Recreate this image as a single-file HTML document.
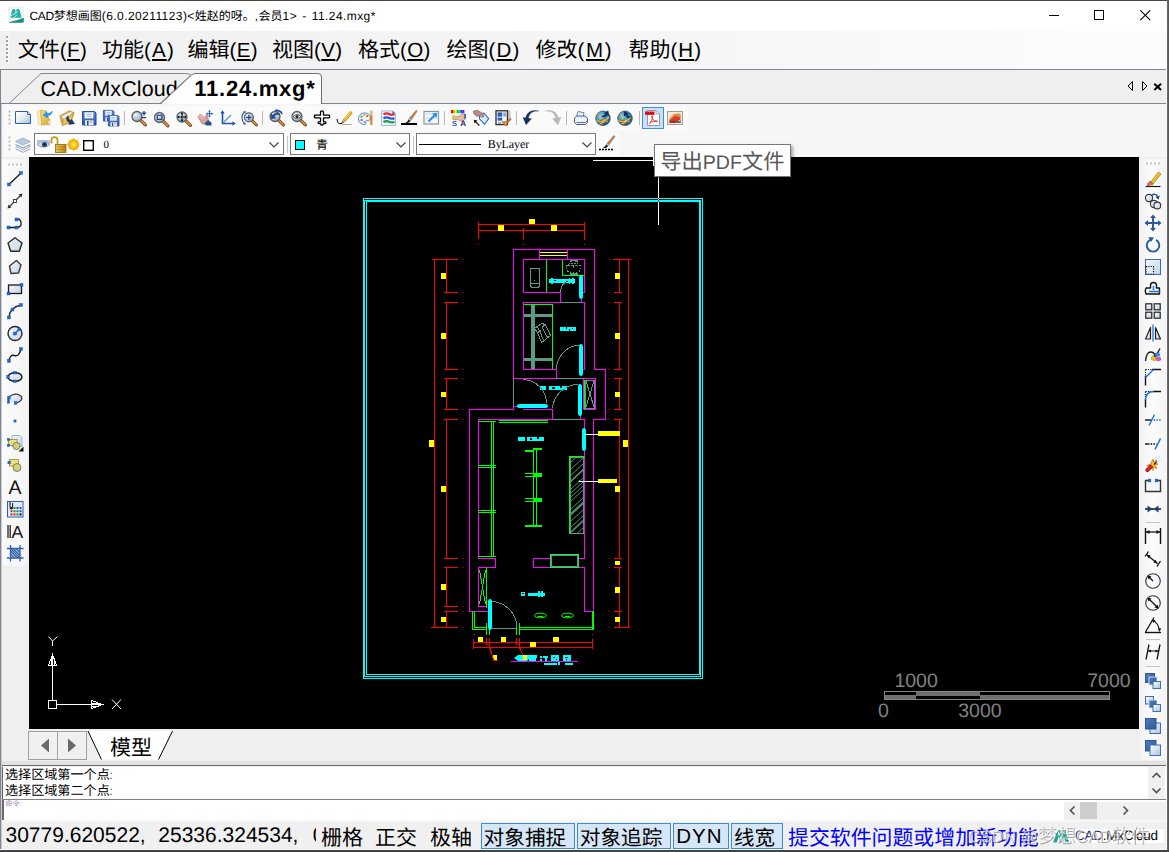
<!DOCTYPE html>
<html lang="zh"><head><meta charset="utf-8"><title>CAD梦想画图 - 11.24.mxg</title>
<style>
html,body{margin:0;padding:0;background:#f0f0f0;}
body{width:1169px;height:852px;overflow:hidden;position:relative;font-family:"Liberation Sans",sans-serif;text-rendering:geometricPrecision;-webkit-font-smoothing:antialiased;}
svg text{text-rendering:geometricPrecision;}
#w{position:absolute;left:0;top:0;width:1169px;height:852px;overflow:hidden;}
.b,.a,.t{position:absolute;}
.t{white-space:nowrap;line-height:40px;height:40px;font-family:"Liberation Sans",sans-serif;}
.k{display:inline;letter-spacing:0;word-spacing:0;line-height:1;white-space:nowrap;font-family:"Liberation Sans","Noto Sans CJK SC",sans-serif;}
.a{overflow:visible;display:block;}
u{text-decoration:underline;text-decoration-thickness:1.5px;text-underline-offset:2px;}
</style></head>
<body>
<svg width="0" height="0" style="position:absolute"><defs>
<linearGradient id="gp" x1="0" y1="0" x2="1" y2="1"><stop offset="0" stop-color="#fff"/><stop offset=".5" stop-color="#e6eef2"/><stop offset="1" stop-color="#9ebfc8"/></linearGradient>
<radialGradient id="gl" cx=".35" cy=".3" r=".8"><stop offset="0" stop-color="#eef3f8"/><stop offset=".6" stop-color="#b4c2d2"/><stop offset="1" stop-color="#8496ac"/></radialGradient>
<linearGradient id="gf" x1="0" y1="0" x2="1" y2="1"><stop offset="0" stop-color="#f7df86"/><stop offset="1" stop-color="#d6a534"/></linearGradient>
<linearGradient id="gb" x1="0" y1="0" x2="0" y2="1"><stop offset="0" stop-color="#5d8ad6"/><stop offset="1" stop-color="#2b55ab"/></linearGradient>
<linearGradient id="gs" x1="0" y1="0" x2="1" y2="1"><stop offset="0" stop-color="#f4f8fc"/><stop offset="1" stop-color="#c3d3e6"/></linearGradient>
<radialGradient id="gg" cx=".35" cy=".35" r=".75"><stop offset="0" stop-color="#7fd0f0"/><stop offset=".6" stop-color="#2a7fc0"/><stop offset="1" stop-color="#153e78"/></radialGradient>
<radialGradient id="gsun" cx=".5" cy=".5" r=".5"><stop offset="0" stop-color="#fff27a"/><stop offset=".55" stop-color="#ffc414"/><stop offset="1" stop-color="#f39a00"/></radialGradient>
<linearGradient id="go" x1="0" y1="0" x2="1" y2="1"><stop offset="0" stop-color="#4f7fc4"/><stop offset="1" stop-color="#2f5796"/></linearGradient>
<linearGradient id="gow" x1="0" y1="0" x2="1" y2="1"><stop offset="0" stop-color="#ffffff"/><stop offset="1" stop-color="#a9c3dc"/></linearGradient>
<linearGradient id="glock" x1="0" y1="0" x2="1" y2="0"><stop offset="0" stop-color="#f0cf6a"/><stop offset=".5" stop-color="#d8a62c"/><stop offset="1" stop-color="#b9861a"/></linearGradient>
</defs></svg>
<div id="w">
<div class="b " style="left:0px;top:0px;width:1169px;height:852px;background:#f0f0f0;"></div>
<div class="b " style="left:0px;top:0px;width:1169px;height:31px;background:#ffffff;"></div>
<svg class="a" style="left:8px;top:7px;" width="16" height="16" viewBox="0 0 16 16"><rect x=".25" y=".25" width="15.5" height="15.5" rx="1.6" fill="#f4f4f3" stroke="#e2e2e0" stroke-width=".5"/><path d="M2.300 10.700L4.200 3.100Q4.600 1.900 5.800 1.900T7.300 3.100L8.200 10.700z" fill="#1cb3a3"/><path d="M7.600 10.700L8.400 3.100Q8.700 1.900 10 1.900T11.600 3.100L13.600 10.700z" fill="#1cb3a3"/><path d="M2.400 9.300L9.800 4.600M6.200 10.800L9.200 7.400" stroke="#f4f4f3" stroke-width=".8"/><path d="M.800 15.200Q8.500 14 15.750 10.800V14.400Q15.750 15.750 14.400 15.750H1.800Q.800 15.750 .800 15.200z" fill="#11917f"/></svg>
<div class="t title" style="left:29.5px;top:-3.858px;font-size:12px;color:#000;letter-spacing:0.42px;word-spacing:1.4px;"><span style="letter-spacing:-.35px">CAD</span><span class="k" style="font-size:12px">梦想画图</span>(6.0.20211123)&lt;<span class="k" style="font-size:12px">姓赵的呀。</span>,<span class="k" style="font-size:12px">会员</span>1&gt; - 11.24.mxg*</div>
<svg class="a" style="left:1040px;top:0px;" width="129" height="31" viewBox="0 0 129 31"><path d="M9 15.5h10" stroke="#000" stroke-width="1"/><rect x="54.5" y="10.5" width="9" height="9" fill="none" stroke="#000" stroke-width="1"/><path d="M100.3 10.3l9.900 9.900M110.200 10.300l-9.900 9.900" stroke="#000" stroke-width="1.1"/></svg>
<div class="b " style="left:0px;top:31px;width:1169px;height:38px;background:linear-gradient(90deg,#f0f0f0 0%,#f6f6f6 60%,#fcfcfc 100%);"></div>
<svg class="a" style="left:5px;top:35px;" width="5" height="30" viewBox="0 0 5 30"><rect x="2" y="2" width="2" height="2" fill="#fff"/><rect x="1" y="1" width="2" height="2" fill="#a2a2a2"/><rect x="2" y="6" width="2" height="2" fill="#fff"/><rect x="1" y="5" width="2" height="2" fill="#a2a2a2"/><rect x="2" y="10" width="2" height="2" fill="#fff"/><rect x="1" y="9" width="2" height="2" fill="#a2a2a2"/><rect x="2" y="14" width="2" height="2" fill="#fff"/><rect x="1" y="13" width="2" height="2" fill="#a2a2a2"/><rect x="2" y="18" width="2" height="2" fill="#fff"/><rect x="1" y="17" width="2" height="2" fill="#a2a2a2"/><rect x="2" y="22" width="2" height="2" fill="#fff"/><rect x="1" y="21" width="2" height="2" fill="#a2a2a2"/><rect x="2" y="26" width="2" height="2" fill="#fff"/><rect x="1" y="25" width="2" height="2" fill="#a2a2a2"/></svg>
<div class="t menu" style="left:17.8px;top:31.1967px;font-size:20.5px;color:#000;letter-spacing:0.4px;"><span class="k" style="font-size:21px">文件</span>(<u>F</u>)</div>
<div class="t menu" style="left:102px;top:31.1967px;font-size:20.5px;color:#000;letter-spacing:1.2px;"><span class="k" style="font-size:21px">功能</span>(<u>A</u>)</div>
<div class="t menu" style="left:187.5px;top:31.1967px;font-size:20.5px;color:#000;letter-spacing:0.4px;"><span class="k" style="font-size:21px">编辑</span>(<u>E</u>)</div>
<div class="t menu" style="left:272px;top:31.1967px;font-size:20.5px;color:#000;letter-spacing:0.4px;"><span class="k" style="font-size:21px">视图</span>(<u>V</u>)</div>
<div class="t menu" style="left:358px;top:31.1967px;font-size:20.5px;color:#000;letter-spacing:0.4px;"><span class="k" style="font-size:21px">格式</span>(<u>O</u>)</div>
<div class="t menu" style="left:446.5px;top:31.1967px;font-size:20.5px;color:#000;letter-spacing:1.2px;"><span class="k" style="font-size:21px">绘图</span>(<u>D</u>)</div>
<div class="t menu" style="left:535.5px;top:31.1967px;font-size:20.5px;color:#000;letter-spacing:1.6px;"><span class="k" style="font-size:21px">修改</span>(<u>M</u>)</div>
<div class="t menu" style="left:628.5px;top:31.1967px;font-size:20.5px;color:#000;letter-spacing:1px;"><span class="k" style="font-size:21px">帮助</span>(<u>H</u>)</div>
<div class="b " style="left:0px;top:69px;width:1169px;height:35px;background:#efefef;"></div>
<div class="b " style="left:0px;top:69px;width:1167px;height:1.3px;background:#7f8594;"></div>
<div class="b " style="left:1px;top:103px;width:1166px;height:1.3px;background:#7f8594;"></div>
<svg class="a" style="left:0px;top:69px;" width="340" height="36" viewBox="0 0 340 36"><path d="M0.5 34.5V0.5" stroke="#a0a0a0" fill="none"/><path d="M9 34.5L41 4.5H186Q189 4.500 191 6L160 34.5z" fill="#efefef" stroke="#7c7c7c" stroke-width=".9"/></svg>
<div class="t tab1" style="left:40.6px;top:68.7502px;font-size:21.5px;color:#000;letter-spacing:0.1px;">CAD.MxCloud</div>
<svg class="a" style="left:0px;top:69px;" width="340" height="36" viewBox="0 0 340 36"><path d="M161 34.5L191.500 6Q193.500 4.500 196 4.5H318Q321.5 4.5 321.5 8V34.5z" fill="#fff" stroke="#6e6e6e" stroke-width="1"/><path d="M162 34.5H321" stroke="#fff" stroke-width="1.4"/></svg>
<div class="t tab2" style="left:194.3px;top:68.577px;font-size:22px;color:#000;letter-spacing:0.75px;font-weight:bold;">11.24.mxg*</div>
<svg class="a" style="left:1124px;top:78px;" width="40" height="14" viewBox="0 0 40 14"><path d="M8.5 3.5v9l-4.500-4.500z" fill="none" stroke="#000" stroke-width="1"/><path d="M18.5 3.5v9l4.500-4.500z" fill="none" stroke="#000" stroke-width="1"/><path d="M30.300 5.800l6.800 6.200M37.100 5.800l-6.800 6.200" stroke="#000" stroke-width="2"/></svg>
<div class="b " style="left:0px;top:104.3px;width:1169px;height:53px;background:#f6f6f6;"></div>
<div class="b " style="left:4.5px;top:105.5px;width:683px;height:25px;background:#fafafa;border-radius:4px;"></div>
<div class="b " style="left:4.5px;top:132px;width:615px;height:23.5px;background:#fafafa;border-radius:4px;"></div>
<svg class="a" style="left:7.5px;top:109px;" width="3" height="18" viewBox="0 0 3 18"><rect x="0.5" y="1.5" width="2" height="2" fill="#bdbdbd"/><rect x="0.5" y="5.5" width="2" height="2" fill="#bdbdbd"/><rect x="0.5" y="9.5" width="2" height="2" fill="#bdbdbd"/><rect x="0.5" y="13.5" width="2" height="2" fill="#bdbdbd"/></svg>
<svg class="a" style="left:7.5px;top:135px;" width="3" height="18" viewBox="0 0 3 18"><rect x="0.5" y="1.5" width="2" height="2" fill="#bdbdbd"/><rect x="0.5" y="5.5" width="2" height="2" fill="#bdbdbd"/><rect x="0.5" y="9.5" width="2" height="2" fill="#bdbdbd"/><rect x="0.5" y="13.5" width="2" height="2" fill="#bdbdbd"/></svg>
<svg class="a" style="left:15px;top:110px;" width="16" height="16" viewBox="0 0 16 16"><path d="M0.5 1.5h12.2l2.8 2.8v9.2h-15z" fill="url(#gp)" stroke="#2b5fb4"/><path d="M12.5 1.5v3h3" fill="#eef4fa" stroke="#2b5fb4" stroke-linejoin="round"/></svg>
<svg class="a" style="left:37px;top:110px;" width="16" height="16" viewBox="0 0 16 16"><path d="M.5 1.300L3.800 .300L4.700 15L1.500 13.900z" fill="#fbefb4" stroke="#d6ad48" stroke-width=".5"/><path d="M3.800 .300L9.200 .900L9.300 3.600L12.600 9.500L13 14.600L4.700 15z" fill="url(#gf)" stroke="#c79a35" stroke-width=".6"/><path d="M11.300 10.500l1.300 .300 .200 3.300-1.300 .100z" fill="#f6f0d0"/><path d="M15.400 1.100C14.900 4.500 12.700 5.900 10.600 5.700L10.900 7.800L6 5.200L9.900 1.500L10.200 3.500C12.100 3.600 13.900 2.900 15.400 1.100z" fill="#2b9cf2" stroke="#1b7bd0" stroke-width=".4"/></svg>
<svg class="a" style="left:59px;top:110px;" width="16" height="16" viewBox="0 0 16 16"><path d="M.800 5.700L10.300 .700L15.300 2.700L11.700 12.300L3.300 15.500z" fill="#d9aa3c" stroke="#b58828" stroke-width=".6"/><path d="M2.600 6.600L11.300 2L13.400 3L4.600 9.300z" fill="#eef4fb" stroke="#b9c6d6" stroke-width=".4"/><path d="M3.300 15.500L4.600 8.800L14.600 3.700L11.700 12.300z" fill="url(#gf)" stroke="#b58828" stroke-width=".5"/><path d="M8.600 6.200C6.800 8.400 7.600 11.400 10.600 12.600L9.800 14.400L15.600 13.700L12.600 9.200L11.800 10.800C10 10.100 9 8.400 9.600 6.600z" fill="#17376f" stroke="#0d2450" stroke-width=".4"/></svg>
<svg class="a" style="left:80.7px;top:110px;" width="16" height="16" viewBox="0 0 16 16"><g transform="translate(1 1) scale(1)"><path d="M0.5 0.5h12l1.500 1.500v12h-13.500z" fill="url(#gb)" stroke="#27489c"/><rect x="2.800" y="1.200" width="8.400" height="6" fill="#fdfefe" stroke="#a9bfe6" stroke-width=".5"/><path d="M4.300 3.200h5.400M4.300 5.200h5.400" stroke="#7f9fd0" stroke-width=".8"/><rect x="3" y="9.300" width="8.500" height="4.700" fill="#e9edf4"/><rect x="5" y="10" width="1.600" height="4" fill="#2b4a96"/><rect x="8" y="10" width="2" height="2" fill="#b9c86a"/></g></svg>
<svg class="a" style="left:103px;top:110px;" width="16" height="16" viewBox="0 0 16 16"><g transform="translate(0 0) scale(0.785714)"><path d="M0.5 0.5h12l1.500 1.500v12h-13.500z" fill="url(#gb)" stroke="#27489c"/><rect x="2.800" y="1.200" width="8.400" height="6" fill="#fdfefe" stroke="#a9bfe6" stroke-width=".5"/><path d="M4.300 3.200h5.400M4.300 5.200h5.400" stroke="#7f9fd0" stroke-width=".8"/><rect x="3" y="9.300" width="8.500" height="4.700" fill="#e9edf4"/><rect x="5" y="10" width="1.600" height="4" fill="#2b4a96"/><rect x="8" y="10" width="2" height="2" fill="#b9c86a"/></g><g transform="translate(5 5) scale(0.785714)"><path d="M0.5 0.5h12l1.500 1.500v12h-13.500z" fill="url(#gb)" stroke="#27489c"/><rect x="2.800" y="1.200" width="8.400" height="6" fill="#fdfefe" stroke="#a9bfe6" stroke-width=".5"/><path d="M4.300 3.200h5.400M4.300 5.200h5.400" stroke="#7f9fd0" stroke-width=".8"/><rect x="3" y="9.300" width="8.500" height="4.700" fill="#e9edf4"/><rect x="5" y="10" width="1.600" height="4" fill="#2b4a96"/><rect x="8" y="10" width="2" height="2" fill="#b9c86a"/></g></svg>
<div class="b " style="left:124px;top:111px;width:1px;height:14px;background:#b8b8b8;"></div>
<svg class="a" style="left:131px;top:110px;" width="16" height="16" viewBox="0 0 16 16"><path d="M9.8 10.3l4.6 4.6" stroke="#6b4420" stroke-width="3.2" stroke-linecap="round"/><path d="M9.8 10.3l4.4 4.4" stroke="#e08a3c" stroke-width="1.8" stroke-linecap="round"/><circle cx="6" cy="6.5" r="5" fill="url(#gl)" stroke="#5a5f66" stroke-width="1.3"/><path d="M10.8 3.2h4.4M13 1v4.4M10.8 7.6h4.4" stroke="#1e3f86" stroke-width="1.3"/></svg>
<svg class="a" style="left:151.7px;top:110px;" width="16" height="16" viewBox="0 0 16 16"><g transform="translate(1.5 1)"><path d="M9.8 10.3l4.6 4.6" stroke="#6b4420" stroke-width="3.2" stroke-linecap="round"/><path d="M9.8 10.3l4.4 4.4" stroke="#e08a3c" stroke-width="1.8" stroke-linecap="round"/><circle cx="6" cy="6.5" r="5" fill="url(#gl)" stroke="#5a5f66" stroke-width="1.3"/><rect x="3.8" y="4.2" width="4.6" height="4.2" fill="none" stroke="#1f3f8c" stroke-width="1.2"/></g></svg>
<svg class="a" style="left:174.5px;top:110px;" width="16" height="16" viewBox="0 0 16 16"><g transform="translate(1 .5)"><path d="M9.8 10.3l4.6 4.6" stroke="#6b4420" stroke-width="3.2" stroke-linecap="round"/><path d="M9.8 10.3l4.4 4.4" stroke="#e08a3c" stroke-width="1.8" stroke-linecap="round"/><circle cx="6" cy="6.5" r="5" fill="url(#gl)" stroke="#5a5f66" stroke-width="1.3"/><path d="M6 2.6v7.8M2.1 6.5h7.8" stroke="#111" stroke-width="1.1"/><path d="M6 1.8l1.5 1.9h-3zM6 11.2l1.5-1.9h-3zM1.3 6.5l1.9-1.5v3zM10.7 6.5l-1.9-1.5v3z" fill="#111"/></g></svg>
<svg class="a" style="left:197px;top:110px;" width="16" height="16" viewBox="0 0 16 16"><path d="M1 6.5l2-2.5 5.5 4 .6-3.2 1.6.2.6 5.6-3.6 4-3-1.2z" fill="#d9a0a0" stroke="#b07a7c" stroke-width=".7"/><path d="M2 4l5.4 4.2M1.2 5.4l5.2 4" stroke="#f2c9c6" stroke-width=".9"/><path d="M7.6 13.6l3.6-3.6 3.3 2.8v2.7h-5.2z" fill="#25508f"/><path d="M12.5 .6v6.2M9.4 3.7h6.2" stroke="#2b5fa8" stroke-width="1"/><path d="M12.5 0l1.3 1.6h-2.6zM12.5 7.4l1.3-1.6h-2.6zM8.8 3.7l1.6-1.3v2.6zM16.2 3.7l-1.6-1.3v2.6z" fill="#2b5fa8"/></svg>
<svg class="a" style="left:219.5px;top:110px;" width="16" height="16" viewBox="0 0 16 16"><path d="M2.5 2v11.5h11.5" fill="none" stroke="#1f57a8" stroke-width="1.6"/><path d="M2.5 .2l2.2 3.3h-4.4zM15.8 13.5l-3.3 2.2v-4.4z" fill="#1f57a8"/><path d="M3.5 12.5l7.5-7.5" stroke="#5b8fd6" stroke-width="1.3"/></svg>
<svg class="a" style="left:241px;top:110px;" width="16" height="16" viewBox="0 0 16 16"><g transform="translate(2.5 1.5) scale(.9)"><path d="M9.8 10.3l4.6 4.6" stroke="#6b4420" stroke-width="3.2" stroke-linecap="round"/><path d="M9.8 10.3l4.4 4.4" stroke="#e08a3c" stroke-width="1.8" stroke-linecap="round"/><circle cx="6" cy="6.5" r="5" fill="url(#gl)" stroke="#5a5f66" stroke-width="1.3"/><path d="M6 3.6v5.8M3.1 6.5h5.8" stroke="#1f3f8c" stroke-width="1.3"/></g><path d="M3.2 2.2c-3 3.2-3 8 .2 11.4" fill="none" stroke="#2b5592" stroke-width="1.1"/><path d="M2 1.5l2.8-.6-.4 2.8zM2.2 14.4l2.8.2-1-2.6z" fill="#2b5592"/></svg>
<div class="b " style="left:262px;top:111px;width:1px;height:14px;background:#b8b8b8;"></div>
<svg class="a" style="left:269px;top:110px;" width="16" height="16" viewBox="0 0 16 16"><path d="M9.8 10.3l4.6 4.6" stroke="#6b4420" stroke-width="3.2" stroke-linecap="round"/><path d="M9.8 10.3l4.4 4.4" stroke="#e08a3c" stroke-width="1.8" stroke-linecap="round"/><circle cx="6" cy="6.5" r="5" fill="url(#gl)" stroke="#5a5f66" stroke-width="1.3"/><path d="M2.2 8.6v-4.8l1.5 1.4c2.2-2.6 5.6-2.8 7.4-.6-2.2-.8-4.4-.2-5.8 2l1.6 1.6z" fill="#1c4a9c" stroke="#12346f" stroke-width=".4"/><path d="M6 .6c3 -.8 6.6.6 7 3.6" fill="none" stroke="#1c4a9c" stroke-width="1.6"/></svg>
<svg class="a" style="left:291px;top:110px;" width="16" height="16" viewBox="0 0 16 16"><path d="M9.8 10.3l4.6 4.6" stroke="#6b4420" stroke-width="3.2" stroke-linecap="round"/><path d="M9.8 10.3l4.4 4.4" stroke="#e08a3c" stroke-width="1.8" stroke-linecap="round"/><circle cx="6" cy="6.5" r="5" fill="url(#gl)" stroke="#5a5f66" stroke-width="1.3"/><path d="M2 6.5q4-4 8 0q-4 4-8 0z" fill="#f2f5f8" stroke="#444" stroke-width=".8"/><circle cx="6" cy="6.5" r="1.5" fill="#222"/></svg>
<svg class="a" style="left:313.5px;top:110px;" width="16" height="16" viewBox="0 0 16 16"><path d="M8 .8q1.5 0 1.5 1.8v2.6h5.6q.4 0 .4.6v1.5q0 .5-.4.5h-5.6v4h1.8q.5 0 .5.5v.8q0 .5-.5.5h-1.9q-.2 1.6-1.4 1.6t-1.4-1.6h-1.9q-.5 0-.5-.5v-.8q0-.5.5-.5h1.8v-4h-5.6q-.4 0-.4-.5v-1.5q0-.6.4-.6h5.6v-2.6q0-1.8 1.5-1.8z" fill="#fff" stroke="#000" stroke-width="1.3" stroke-linejoin="round"/></svg>
<svg class="a" style="left:335.5px;top:110px;" width="16" height="16" viewBox="0 0 16 16"><path d="M1 9c.2 4.6 3.2 6 6.2 3.2" fill="none" stroke="#111" stroke-width="1.1"/><path d="M6.5 14.5h9" stroke="#9a8f7d" stroke-width=".8"/><path d="M6.2 12.8l1.2-3.3 6.9-8.3 2 1.7-6.9 8.3z" fill="#f1b81b" stroke="#a87512" stroke-width=".6"/><path d="M13.3 2.3l2 1.7" stroke="#c98f14" stroke-width=".6"/><path d="M6.2 12.8l1.2-3.3 1.9 1.7z" fill="#e9c9a2" stroke="#8f6a3a" stroke-width=".4"/><path d="M6.2 12.8l.5-1.4.8.7z" fill="#222"/><path d="M8.6 8.7l6.6-7.6" stroke="#fde27a" stroke-width=".8"/></svg>
<svg class="a" style="left:358px;top:110px;" width="16" height="16" viewBox="0 0 16 16"><path d="M6.5 3c-3.8 0-6 2.6-6 5.8s2.6 5.700 6 5.700c1.600 0 1.800-1 1.300-1.800-.6-1 .2-2 1.500-2 2 0 3.200-.8 3.200-3 0-2.800-2.600-4.700-6-4.700z" fill="#e9f1fa" stroke="#4c86c6" stroke-width="1"/><circle cx="3.4" cy="6.6" r="1.1" fill="#3aa33a"/><circle cx="6.3" cy="5" r="1.1" fill="#e6a11a"/><circle cx="9.2" cy="6" r="1.1" fill="#e0482a"/><circle cx="3.6" cy="10" r="1.1" fill="#d63a3a"/><circle cx="6.4" cy="12" r="1" fill="#7aa7dc"/><path d="M13.3 .5c.9 0 1.300 1.400 1 3l-.5 2.500h-1.400l-.3-2.500c-.2-1.600.3-3 1.200-3z" fill="#e9c59c" stroke="#b98550" stroke-width=".4"/><path d="M12.3 6h2l-.2 8.500q-.8 1.200-1.600 0z" fill="#f08a1c" stroke="#c96a10" stroke-width=".4"/></svg>
<svg class="a" style="left:379.5px;top:110px;" width="16" height="16" viewBox="0 0 16 16"><path d="M1.5 1h11l3 2.500v12h-14z" fill="#eef4fb" stroke="#9cbbe0" stroke-width="1"/><path d="M12.5 1v2.500h3" fill="#4c86c6" stroke="#4c86c6" stroke-width=".5"/><path d="M3.5 4.500q3-2 5.500-.5t5.500 0" fill="none" stroke="#e8252b" stroke-width="2.2"/><path d="M3.5 8.300q3-1.600 5.500-.3t5.500.2" fill="none" stroke="#2b53e0" stroke-width="2.2"/><path d="M3.5 12q3-1.500 5.500-.3t5.500.3" fill="none" stroke="#1d9a3e" stroke-width="2.2"/></svg>
<svg class="a" style="left:401px;top:110px;" width="16" height="16" viewBox="0 0 16 16"><path d="M0 14h16" stroke="#000" stroke-width="2"/><path d="M15.200 .3l1 .8-5.600 8.300-2-1.400z" fill="#c98552" stroke="#8a5228" stroke-width=".5"/><path d="M8.600 8l2 1.400-1.200 1.600-2-1.300z" fill="#b9bec6" stroke="#666" stroke-width=".4"/><path d="M7.400 9.700l2 1.300c-.8 1.600-3 2.200-5.400 2 1.800-.8 2.600-1.800 3.400-3.300z" fill="#141414"/></svg>
<svg class="a" style="left:423px;top:110px;" width="16" height="16" viewBox="0 0 16 16"><rect x="1" y="1.5" width="14.5" height="12.5" fill="#f4f6f8" stroke="#8f959c" stroke-width="1.2"/><path d="M1.5 8h14M1.5 4h14" stroke="#d1d6dc" stroke-width="1"/><path d="M5.5 11.500l7-7" stroke="#1c8df2" stroke-width="2"/><path d="M14.200 2.800l-.6 5-4.400-4.400z" fill="#1c8df2"/></svg>
<div class="b " style="left:444px;top:111px;width:1px;height:14px;background:#b8b8b8;"></div>
<svg class="a" style="left:451px;top:110px;" width="16" height="16" viewBox="0 0 16 16"><rect x="0" y="0" width="2" height="3.2" fill="#ff0000"/><rect x="1.9" y="0" width="2" height="3.2" fill="#ff8000"/><rect x="3.8" y="0" width="2" height="3.2" fill="#ffff00"/><rect x="5.7" y="0" width="2" height="3.2" fill="#00d000"/><rect x="7.6" y="0" width="2" height="3.2" fill="#00c8c8"/><rect x="9.5" y="0" width="2" height="3.2" fill="#0040ff"/><rect x="11.4" y="0" width="2" height="3.2" fill="#a000e0"/><path d="M2 6.500h5.500l4-2.800 2.700.5.6 4.500-3 2.300h-3l-1.600-1.400h-5.200z" fill="#e3b7a8" stroke="#9a6a60" stroke-width=".6"/><rect x="1" y="5.5" width="5" height="3.6" fill="#d9c84a" opacity=".85"/><path d="M14 4v4.500" stroke="#2d5fb0" stroke-width="1.6"/><text x="1" y="15.8" font-family="Liberation Sans, sans-serif" font-weight="bold" font-size="7.5" fill="#2d5fb0">S</text><text x="9.3" y="15.8" font-family="Liberation Sans, sans-serif" font-weight="bold" font-size="8" fill="#1d2f55">A</text></svg>
<svg class="a" style="left:473px;top:110px;" width="16" height="16" viewBox="0 0 16 16"><path d="M6.5 6.200l4.200-3.200 5 5.600-4.200 5.800-5-5.600z" fill="#d7e8f8" stroke="#2b6fc0" stroke-width="1.1"/><path d="M8 7.500l3-2.300" stroke="#fff" stroke-width="1"/><path d="M.5 1l4-.8 5.200 3.300 1.300 2.800-2 1-2.400-1.700-2.600.8-3.500-3z" fill="#b98d86" stroke="#7d5a56" stroke-width=".6"/><path d="M1.200 10.300l5.200 5.200" stroke="#111" stroke-width="1.1"/><path d="M.8 9.800l3.600.8-2.800 2.800z" fill="#111"/></svg>
<svg class="a" style="left:495px;top:110px;" width="16" height="16" viewBox="0 0 16 16"><rect x="1" y=".8" width="11.5" height="13.8" fill="#f2f5f9" stroke="#2e2e2e" stroke-width="1.3"/><rect x="2.6" y="2.4" width="4.6" height="4.2" fill="#2e5fb4"/><rect x="2.6" y="7.6" width="4.6" height="3" fill="#2e5fb4"/><rect x="8.2" y="2.4" width="3" height="4.2" fill="#8fa9cf"/><path d="M3 13h3" stroke="#4c72b8" stroke-width="1"/><path d="M13 .8h2.600v10.200h-2.600z" fill="#9a9a9a" opacity=".55"/><path d="M15.600 8.200l.8 1-3.600 3.400-1.200-1.200z" fill="#c9782c" stroke="#8a4e18" stroke-width=".4"/><path d="M6.800 11.800l4.800-.4 1.200 1.200-1.400 3-2.400-.6-.6-1.600z" fill="#e08a2c" stroke="#8a4e18" stroke-width=".5"/></svg>
<div class="b " style="left:516px;top:111px;width:1px;height:14px;background:#b8b8b8;"></div>
<svg class="a" style="left:523px;top:110px;" width="16" height="16" viewBox="0 0 16 16"><path d="M15.5 1.2c-5-.8-9.2 1.8-10.2 7l3 .6-5.2 6-3-7.4 2.6.6c1.2-6 6.8-9 12.8-6.8z" fill="#16305e" stroke="#0c2148" stroke-width=".4"/></svg>
<svg class="a" style="left:545px;top:110px;" width="16" height="16" viewBox="0 0 16 16"><path d="M.5 1.2c5-.8 9.2 1.8 10.2 7l-3 .6 5.2 6 3-7.4-2.6.6c-1.2-6-6.8-9-12.8-6.8z" fill="#b9b9b9" stroke="#a6a6a6" stroke-width=".4"/></svg>
<div class="b " style="left:566px;top:111px;width:1px;height:14px;background:#b8b8b8;"></div>
<svg class="a" style="left:573px;top:110px;" width="16" height="16" viewBox="0 0 16 16"><path d="M3.5 6.500l1.500-5 6 1.200-1 4.500" fill="#fff" stroke="#5b6f9a" stroke-width=".9"/><path d="M1.5 8.200l2-2.200h8.500l2.500 2.200v4.300l-2 2h-9l-2-2z" fill="#e7ecf5" stroke="#47598a" stroke-width="1"/><path d="M3.5 12.500h9l1.500-1.500" fill="none" stroke="#47598a" stroke-width=".8"/><path d="M4 10h8" stroke="#fff" stroke-width="1.2"/><path d="M5.500 3.500l3.500.7M5 5.200l3.500.7" stroke="#a9b6cf" stroke-width=".6"/></svg>
<svg class="a" style="left:595px;top:110px;" width="16" height="16" viewBox="0 0 16 16"><circle cx="8" cy="8.3" r="7.3" fill="url(#gg)" stroke="#3a4656" stroke-width=".7"/><path d="M1.5 10.500c3 1.800 8.500 1 12.500-3M3 4.500c2.500 3 4 7.500 3.500 11M4.500 13.500c3-.5 7.500-3 9-7" fill="none" stroke="#f5c518" stroke-width="1.1"/><circle cx="3.5" cy="5.5" r="1" fill="#f08a1c"/><circle cx="6.2" cy="10.5" r="1" fill="#e8402a"/><circle cx="12" cy="11.5" r="1" fill="#f08a1c"/><circle cx="7" cy="14.5" r="1" fill="#e8402a"/><path d="M6.500 6c1.800 1.600 4.600 1.200 5.600-1.200l1.600.6-.6-4.600-3.800 2.400 1.400.6c-.8 1.600-2.600 2.400-4.200 2.200z" fill="#15305f" stroke="#0b1f45" stroke-width=".4"/></svg>
<svg class="a" style="left:617px;top:110px;" width="16" height="16" viewBox="0 0 16 16"><circle cx="8" cy="8.3" r="7.3" fill="url(#gg)" stroke="#3a4656" stroke-width=".7"/><path d="M1.500 10.500c3 1.800 8.500 1 12.500-3M3 4.500c2.500 3 4 7.500 3.500 11M4.500 13.500c3-.5 7.500-3 9-7" fill="none" stroke="#f5c518" stroke-width="1.1"/><circle cx="3.5" cy="5.5" r="1" fill="#f08a1c"/><circle cx="6.2" cy="10.5" r="1" fill="#e8402a"/><circle cx="12" cy="11.5" r="1" fill="#f08a1c"/><circle cx="7" cy="14.5" r="1" fill="#e8402a"/><path d="M14 7c-1.800 1.600-4.600.6-5.400-1.800l-1.600.8.2-4.600 4 2-1.400.8c.8 1.600 2.600 3 4.200 2.800z" fill="#15305f" stroke="#0b1f45" stroke-width=".4"/></svg>
<div class="b " style="left:639px;top:111px;width:1px;height:14px;background:#b8b8b8;"></div>
<div class="b " style="left:642px;top:107px;width:22px;height:22px;background:#c9e0f7;border:1px solid #3a8ee6;box-sizing:border-box;"></div>
<svg class="a" style="left:645px;top:110px;" width="16" height="16" viewBox="0 0 16 16"><path d="M2.500 .5h8.500l3.500 3.500v11.500h-12z" fill="#fff" stroke="#8d8d8d" stroke-width=".9"/><path d="M11 .5v3.500h3.500" fill="#e6e6e6" stroke="#8d8d8d" stroke-width=".7"/><rect x="0" y="1.5" width="9.5" height="3.4" fill="#d6101a"/><path d="M4.500 13.500c1.500-1.500 3-4.500 3.200-7 .1-1-1-1-1 0 .2 2.200 2 4.600 4.800 5.300 1.200.3 1.400-.9.2-1-2.400-.2-5.400 1-7.200 2.700z" fill="none" stroke="#e0202a" stroke-width=".9"/></svg>
<svg class="a" style="left:667px;top:110px;" width="16" height="16" viewBox="0 0 16 16"><rect x=".6" y="1.6" width="14.8" height="12.8" fill="#fcfcfc" stroke="#9a9a9a" stroke-width="1.1"/><rect x="2.5" y="3.5" width="11" height="9" fill="#e9e2b0"/><path d="M9 3.500h4.500v4z" fill="#9ab85a"/><path d="M2.500 9l5-5.500 6 1.500v3.500l-5 3.500h-6z" fill="#f08438"/><path d="M2.500 10l6-4 5 1.500v2l-6 3.500h-5z" fill="#d8402a"/><path d="M2.500 11.500l5-1 3 2.500h-8z" fill="#8a3a20"/><path d="M10 10.500l1 2.500 1-2 1 2 .5-2.500" fill="none" stroke="#333" stroke-width=".8"/></svg>
<svg class="a" style="left:14px;top:136px;" width="18" height="18" viewBox="0 0 18 18"><path d="M1.500 5.500l7.500-3.500 7.500 3.500-7.500 3.500z" fill="#b9cbe3" stroke="#7f99bd" stroke-width=".6"/><path d="M1.500 8.500l7.500 3.500 7.500-3.500" fill="none" stroke="#7f99bd" stroke-width="1"/><path d="M1.500 10.500l7.500 3.500 7.500-3.500-2.500-1.100-5 2.300-5-2.300z" fill="#c9d7ea" stroke="#7f99bd" stroke-width=".5"/><path d="M1.500 12.800l7.500 3.500 7.500-3.500" fill="none" stroke="#8fa6c6" stroke-width="1"/></svg>
<div class="b " style="left:34px;top:133px;width:250px;height:22px;background:#fff;border:1px solid #7a7a7a;box-sizing:border-box;"></div>
<svg class="a" style="left:36px;top:136px;" width="60" height="18" viewBox="0 0 60 18"><path d="M1 8.500q6.500-6.500 13 0q-6.500 5.500-13 0z" fill="#cdd9ea" stroke="#6d87ad" stroke-width=".7"/><path d="M1 4h13v4q-6.500-5-13 0z" fill="#9fb3d2" opacity=".8"/><circle cx="8.5" cy="8.5" r="2.6" fill="#34507c"/><circle cx="8.5" cy="8.5" r="1.1" fill="#0e1b33"/><path d="M15.500 7.500v-3.500q0-2.800 3-2.800t3 2.800v4.500" fill="none" stroke="#c9981f" stroke-width="1.8"/><rect x="19.5" y="8.5" width="10.5" height="8" fill="url(#glock)" stroke="#8f6a10" stroke-width=".8"/><path d="M20 11h9.500M20 13.500h9.500" stroke="#8f6a10" stroke-width=".7" opacity=".7"/><circle cx="37.5" cy="8.5" r="5.6" fill="url(#gsun)"/><path d="M37.500 1.500v1M37.500 14.500v1M30.500 8.500h1M43.500 8.500h1M32.600 3.600l.7.7M42.400 3.600l-.7.7M32.600 13.400l.7-.7M42.400 13.400l-.7-.7" stroke="#f5b400" stroke-width="1"/><rect x="47.7" y="4.7" width="9.6" height="9.6" fill="#fff" stroke="#000" stroke-width="1.4"/></svg>
<div class="t " style="left:103.5px;top:124.588px;font-size:11px;color:#000;font-family:'Liberation Serif',serif;">0</div>
<svg class="a" style="left:268px;top:141px;" width="12" height="8" viewBox="0 0 12 8"><path d="M1.5 1.5l4.5 4.5 4.5-4.5" fill="none" stroke="#444" stroke-width="1.2"/></svg>
<div class="b " style="left:286.5px;top:136px;width:1px;height:17px;background:#c8c8c8;"></div>
<div class="b " style="left:290px;top:133px;width:120px;height:22px;background:#fff;border:1px solid #7a7a7a;box-sizing:border-box;"></div>
<div class="b " style="left:295px;top:140px;width:10px;height:10px;background:#00ffff;border:1px solid #000;box-sizing:border-box;"></div>
<div class="t " style="left:316px;top:125.042px;font-size:12px;color:#000;"><span class="k" style="font-size:12px">青</span></div>
<svg class="a" style="left:395px;top:141px;" width="12" height="8" viewBox="0 0 12 8"><path d="M1.5 1.5l4.5 4.5 4.5-4.5" fill="none" stroke="#444" stroke-width="1.2"/></svg>
<div class="b " style="left:412.5px;top:136px;width:1px;height:17px;background:#c8c8c8;"></div>
<div class="b " style="left:416px;top:133px;width:180px;height:22px;background:#fff;border:1px solid #7a7a7a;box-sizing:border-box;"></div>
<div class="b " style="left:419px;top:144px;width:62px;height:1px;background:#000;"></div>
<div class="t " style="left:487.8px;top:124.15px;font-size:12px;color:#000;letter-spacing:-0.1px;font-family:'Liberation Serif',serif;">ByLayer</div>
<svg class="a" style="left:581px;top:141px;" width="12" height="8" viewBox="0 0 12 8"><path d="M1.5 1.5l4.5 4.5 4.5-4.5" fill="none" stroke="#444" stroke-width="1.2"/></svg>
<svg class="a" style="left:598px;top:135px;" width="18" height="18" viewBox="0 0 18 18"><path d="M1 14.500h15" stroke="#000" stroke-width="1.6" stroke-dasharray="2 1"/><path d="M15.800 .5l1.200.9-5.800 8.200-2-1.400z" fill="#c98552" stroke="#8a5228" stroke-width=".5"/><path d="M9.200 8.200l2 1.400-1.200 1.500-2-1.300z" fill="#b9bec6" stroke="#666" stroke-width=".4"/><path d="M8 9.800l2 1.300c-.8 1.600-3.200 2.400-5.600 2.200 1.800-.8 2.800-2 3.600-3.500z" fill="#141414"/></svg>
<div class="b " style="left:0px;top:157px;width:29px;height:572px;background:#efefef;"></div>
<div class="b " style="left:2px;top:158.5px;width:24.5px;height:407px;border-radius:4px;background:linear-gradient(90deg,#fbfbfb,#f4f4f4);"></div>
<svg class="a" style="left:7px;top:163px;" width="16" height="3" viewBox="0 0 16 3"><rect x="1" y="0.5" width="2" height="2" fill="#c4c4c4"/><rect x="5" y="0.5" width="2" height="2" fill="#c4c4c4"/><rect x="9" y="0.5" width="2" height="2" fill="#c4c4c4"/><rect x="13" y="0.5" width="2" height="2" fill="#c4c4c4"/></svg>
<svg class="a" style="left:6px;top:170px;" width="18" height="18" viewBox="0 0 18 18"><path d="M3 14.500l12-11.500" stroke="#1a1a1a" stroke-width="1.4"/><rect x="1.5" y="13" width="3" height="3" fill="#1e6fd9" stroke="#0d47a1" stroke-width=".4"/><rect x="13.5" y="1.5" width="3" height="3" fill="#1e6fd9" stroke="#0d47a1" stroke-width=".4"/></svg>
<svg class="a" style="left:6px;top:192px;" width="18" height="18" viewBox="0 0 18 18"><path d="M2.500 15.500l13-13" stroke="#333" stroke-width="1.1"/><path d="M1.500 16.500l1-4 3 3zM16.500 1.500l-4 1 3 3z" fill="#333"/><rect x="7.5" y="7.5" width="3" height="3" fill="#fff" stroke="#333" stroke-width=".9"/></svg>
<svg class="a" style="left:6px;top:214px;" width="18" height="18" viewBox="0 0 18 18"><path d="M2.500 13.500h8q5.500-.5 4.500-5t-4.500-3.500" fill="none" stroke="#1a1a1a" stroke-width="1.3"/><rect x="1" y="12" width="3" height="3" fill="#1e6fd9" stroke="#0d47a1" stroke-width=".4"/><rect x="9" y="12" width="3" height="3" fill="#1e6fd9" stroke="#0d47a1" stroke-width=".4"/><rect x="9" y="4" width="3" height="3" fill="#1e6fd9" stroke="#0d47a1" stroke-width=".4"/></svg>
<svg class="a" style="left:6px;top:236px;" width="18" height="18" viewBox="0 0 18 18"><path d="M9 1.800l7 5.200-2.700 8.200h-8.600l-2.700-8.200z" fill="url(#gs)" stroke="#2a2a2a" stroke-width="1.4" stroke-linejoin="round"/></svg>
<svg class="a" style="left:6px;top:258px;" width="18" height="18" viewBox="0 0 18 18"><path d="M10.500 2.500l4.500 4.500-2.500 8-7.500.5-1.500-7.500z" fill="url(#gs)" stroke="#3a3a3a" stroke-width="1.4" stroke-linejoin="round"/></svg>
<svg class="a" style="left:6px;top:280px;" width="18" height="18" viewBox="0 0 18 18"><rect x="2.5" y="5" width="13" height="8.5" fill="url(#gs)" stroke="#1a1a1a" stroke-width="1.3"/><rect x="1" y="12" width="3" height="3" fill="#1e6fd9" stroke="#0d47a1" stroke-width=".4"/><rect x="14" y="3.5" width="3" height="3" fill="#1e6fd9" stroke="#0d47a1" stroke-width=".4"/></svg>
<svg class="a" style="left:6px;top:302px;" width="18" height="18" viewBox="0 0 18 18"><path d="M3 15.500q.5-10 12-12.500" fill="none" stroke="#333" stroke-width="1.4"/><rect x="1.5" y="14" width="3" height="3" fill="#1e6fd9" stroke="#0d47a1" stroke-width=".4"/><rect x="5" y="6" width="3" height="3" fill="#1e6fd9" stroke="#0d47a1" stroke-width=".4"/><rect x="13.5" y="1.5" width="3" height="3" fill="#1e6fd9" stroke="#0d47a1" stroke-width=".4"/></svg>
<svg class="a" style="left:6px;top:324px;" width="18" height="18" viewBox="0 0 18 18"><circle cx="9" cy="9.5" r="7" fill="url(#gs)" stroke="#2a2a2a" stroke-width="1.4"/><path d="M9 9.500l4.500-4.500" stroke="#1e5fbf" stroke-width="1.2"/><rect x="7.5" y="8" width="3" height="3" fill="#1e6fd9" stroke="#0d47a1" stroke-width=".4"/><rect x="11.9" y="4" width="2.6" height="2.6" fill="#1e6fd9" stroke="#0d47a1" stroke-width=".4"/></svg>
<svg class="a" style="left:6px;top:346px;" width="18" height="18" viewBox="0 0 18 18"><path d="M3 15q1-7 5.500-5.500t6.500-6.500" fill="none" stroke="#1a1a1a" stroke-width="1.4"/><rect x="1.5" y="13.5" width="3" height="3" fill="#1e6fd9" stroke="#0d47a1" stroke-width=".4"/><rect x="13.5" y="1.5" width="3" height="3" fill="#1e6fd9" stroke="#0d47a1" stroke-width=".4"/></svg>
<svg class="a" style="left:6px;top:368px;" width="18" height="18" viewBox="0 0 18 18"><ellipse cx="9" cy="9" rx="7" ry="4.3" fill="url(#gs)" stroke="#1a1a1a" stroke-width="1.4"/><rect x="7.7" y="3.4" width="2.6" height="2.6" fill="#1e6fd9" stroke="#0d47a1" stroke-width=".4"/><rect x="7.7" y="12" width="2.6" height="2.6" fill="#1e6fd9" stroke="#0d47a1" stroke-width=".4"/><rect x="0.7" y="7.7" width="2.6" height="2.6" fill="#1e6fd9" stroke="#0d47a1" stroke-width=".4"/></svg>
<svg class="a" style="left:6px;top:390px;" width="18" height="18" viewBox="0 0 18 18"><path d="M3 11.500q-2.500-4 3-6.500t9.500 1.500q1.500 4.500-5 6.500" fill="url(#gs)" stroke="#3a3a3a" stroke-width="1.3"/><rect x="1.7" y="6.7" width="2.6" height="2.6" fill="#1e6fd9" stroke="#0d47a1" stroke-width=".4"/><rect x="8.2" y="11.7" width="2.6" height="2.6" fill="#1e6fd9" stroke="#0d47a1" stroke-width=".4"/><rect x="1.3" y="10.8" width="2.4" height="2.4" fill="#1e6fd9" stroke="#0d47a1" stroke-width=".4"/></svg>
<svg class="a" style="left:6px;top:412px;" width="18" height="18" viewBox="0 0 18 18"><rect x="7.9" y="7.9" width="2.2" height="2.2" fill="#1e6fd9" stroke="#0d47a1" stroke-width=".4"/></svg>
<svg class="a" style="left:6px;top:434px;" width="18" height="18" viewBox="0 0 18 18"><path d="M6 1.500h8l2 2v9h-10z" fill="url(#gs)" stroke="#8aa7cc" stroke-width=".8"/><rect x="2.5" y="5.5" width="8.5" height="6" fill="#f0e27a" stroke="#8a8a52" stroke-width=".8"/><circle cx="10.5" cy="12" r="3.6" fill="#d8cf7a" stroke="#6a6a4a" stroke-width=".8"/><rect x="1.3" y="4.3" width="2.4" height="2.4" fill="#1e6fd9" stroke="#0d47a1" stroke-width=".4"/><rect x="1.3" y="10.3" width="2.4" height="2.4" fill="#1e6fd9" stroke="#0d47a1" stroke-width=".4"/><path d="M17.500 12.500v5h-5z" fill="#111"/></svg>
<svg class="a" style="left:6px;top:456px;" width="18" height="18" viewBox="0 0 18 18"><rect x="3.5" y="3.5" width="9" height="6.5" fill="#f0e27a" stroke="#8a8a52" stroke-width=".8"/><circle cx="11" cy="11.5" r="4" fill="#d8cf7a" stroke="#6a6a4a" stroke-width=".8"/><rect x="1.9" y="5.2" width="2.6" height="2.6" fill="#1e6fd9" stroke="#0d47a1" stroke-width=".4"/></svg>
<svg class="a" style="left:6px;top:478px;" width="18" height="18" viewBox="0 0 18 18"><text x="9" y="15.8" text-anchor="middle" font-family="Liberation Sans, sans-serif" font-size="19.5" fill="#111">A</text></svg>
<svg class="a" style="left:6px;top:500px;" width="18" height="18" viewBox="0 0 18 18"><rect x="1.5" y="1.5" width="15.5" height="15.5" fill="#dfe9f7" stroke="#2b5fb4" stroke-width="1"/><path d="M4 2v5.500q0 1.500 1.300 1.500t1.300-1.500v-4.500" fill="none" stroke="#111" stroke-width="1"/><rect x="4.5" y="7" width="2" height="2" fill="#111"/><rect x="7.5" y="7" width="2" height="2" fill="#2a8a2a"/><rect x="10.5" y="7" width="2" height="2" fill="#2a4fd0"/><rect x="13.5" y="7" width="2" height="2" fill="#2a4fd0"/><rect x="4.5" y="10.2" width="2" height="2" fill="#d02a2a"/><rect x="7.5" y="10.2" width="2" height="2" fill="#2a8a2a"/><rect x="10.5" y="10.2" width="2" height="2" fill="#2a8a2a"/><rect x="13.5" y="10.2" width="2" height="2" fill="#2a4fd0"/><rect x="4.5" y="13.4" width="2" height="2" fill="#d02a2a"/><rect x="7.5" y="13.4" width="2" height="2" fill="#d02a2a"/><rect x="10.5" y="13.4" width="2" height="2" fill="#2a8a2a"/><rect x="13.5" y="13.4" width="2" height="2" fill="#111"/></svg>
<svg class="a" style="left:6px;top:522px;" width="18" height="18" viewBox="0 0 18 18"><path d="M2 3v13M4.200 3v13" stroke="#111" stroke-width="1.2"/><text x="11.3" y="16" text-anchor="middle" font-family="Liberation Sans, sans-serif" font-size="17.5" fill="#111">A</text></svg>
<svg class="a" style="left:6px;top:544px;" width="18" height="18" viewBox="0 0 18 18"><rect x="4.5" y="4.5" width="9.5" height="9.5" fill="#dbe8f6"/><path d="M4.500 7l7 7M4.500 10l4 4M7 4.500l7 7M10 4.500l4 4" stroke="#2d5c9c" stroke-width="1.3"/><path d="M4.500 1v16.500M14 1v16.500M1 4.500h16.500M1 14h16.500" stroke="#2b5fa8" stroke-width="1.3"/><path d="M4.500 4.500l9.500 9.500" stroke="#2d5c9c" stroke-width="1.3"/></svg>
<div class="b " style="left:1139px;top:157px;width:30px;height:604px;background:#efefef;"></div>
<div class="b " style="left:1140px;top:158.5px;width:26px;height:601.5px;border-radius:4px;background:linear-gradient(90deg,#f3f3f3,#fbfbfb 50%,#f4f4f4);"></div>
<svg class="a" style="left:1145px;top:162px;" width="16" height="3" viewBox="0 0 16 3"><rect x="1" y="0.5" width="2" height="2" fill="#c4c4c4"/><rect x="5" y="0.5" width="2" height="2" fill="#c4c4c4"/><rect x="9" y="0.5" width="2" height="2" fill="#c4c4c4"/><rect x="13" y="0.5" width="2" height="2" fill="#c4c4c4"/></svg>
<svg class="a" style="left:1144px;top:170px;" width="18" height="18" viewBox="0 0 18 18"><path d="M1.500 16.500h15" stroke="#111" stroke-width="1.1"/><path d="M5.500 13.500l9-11.500 2.500 2-9 11.500z" fill="#f0c21c" stroke="#8a6a10" stroke-width=".6"/><path d="M6.500 12.200l2.500 2" stroke="#3aa3a0" stroke-width="1.6"/><path d="M3.500 15.500q-.5-1.500 1-3l1.300-1.400 2.500 2-1.300 1.500q-1.500 1.500-3.500.9z" fill="#e46a6a" stroke="#9a3a3a" stroke-width=".5"/></svg>
<svg class="a" style="left:1144px;top:192px;" width="18" height="18" viewBox="0 0 18 18"><circle cx="5" cy="6" r="3.6" fill="url(#gs)" stroke="#333" stroke-width="1.1"/><circle cx="10" cy="12" r="3.6" fill="url(#gs)" stroke="#333" stroke-width="1.1"/><circle cx="13.3" cy="13.5" r="3.4" fill="url(#gs)" stroke="#333" stroke-width="1.1"/><path d="M7.500 3.500q4-3 6.500 1.500" fill="none" stroke="#1d4f94" stroke-width="1.5"/><path d="M15.800 3.500l-1.300 4.200-3-2.700z" fill="#1d4f94"/></svg>
<svg class="a" style="left:1144px;top:214px;" width="18" height="18" viewBox="0 0 18 18"><path d="M9 2v14M2 9h14" stroke="#2a5a9a" stroke-width="2"/><path d="M9 .5l3 3.500h-6zM9 17.500l3-3.500h-6zM.5 9l3.500-3v6zM17.500 9l-3.500-3v6z" fill="#2a5a9a"/></svg>
<svg class="a" style="left:1144px;top:236px;" width="18" height="18" viewBox="0 0 18 18"><path d="M6.500 3.600a6.300 6.300 0 1 0 5.500.2" fill="none" stroke="#2a5a9a" stroke-width="1.9"/><path d="M4.500 1l5.500.5-3 4.500z" fill="#2a5a9a"/></svg>
<svg class="a" style="left:1144px;top:258px;" width="18" height="18" viewBox="0 0 18 18"><rect x="1.5" y="1.5" width="15" height="15" fill="url(#gs)" stroke="#3a6fb4" stroke-width="1"/><rect x="2" y="8.5" width="7.5" height="7.5" fill="#e9eff8" stroke="#111" stroke-width="1.2" stroke-dasharray="1.2 1.2"/></svg>
<svg class="a" style="left:1144px;top:280px;" width="18" height="18" viewBox="0 0 18 18"><path d="M6.500 8v-2.500q0-3 3-3t3 3v2.500h3v6h-13.500q-1.500-3 0-6z" fill="#f4f8fc" stroke="#111" stroke-width="1.4" stroke-linejoin="round"/><path d="M5 11.500h11M9.500 6v4" stroke="#1e6fd9" stroke-width="1.5"/></svg>
<svg class="a" style="left:1144px;top:302px;" width="18" height="18" viewBox="0 0 18 18"><rect x="1.8" y="1.8" width="6" height="6" fill="url(#gs)" stroke="#222" stroke-width="1.2"/><rect x="1.8" y="10.2" width="6" height="6" fill="url(#gs)" stroke="#222" stroke-width="1.2"/><rect x="10.2" y="1.8" width="6" height="6" fill="url(#gs)" stroke="#222" stroke-width="1.2"/><rect x="10.2" y="10.2" width="6" height="6" fill="url(#gs)" stroke="#222" stroke-width="1.2"/></svg>
<svg class="a" style="left:1144px;top:324px;" width="18" height="18" viewBox="0 0 18 18"><path d="M9 .5v17" stroke="#1e6fd9" stroke-width="1.3"/><path d="M6.500 3.500v11.500h-5zM11.500 3.500v11.500h5z" fill="url(#gs)" stroke="#222" stroke-width="1.2" stroke-linejoin="round"/></svg>
<svg class="a" style="left:1144px;top:346px;" width="18" height="18" viewBox="0 0 18 18"><path d="M1.500 15q1-9 5-9t4 3.500 5.500-7" fill="none" stroke="#222" stroke-width="1.4"/><rect x="11.5" y="7" width="4" height="3.4" fill="#3a8ee6" stroke="#1d5fb0" stroke-width=".5" transform="rotate(-20 13 9)"/><rect x="7.5" y="10.5" width="4.5" height="3.4" fill="#f0c21c" stroke="#a88510" stroke-width=".5" transform="rotate(25 9 12)"/><rect x="12.5" y="11.5" width="4" height="3.2" fill="#e050d8" stroke="#9a2a94" stroke-width=".5" transform="rotate(-15 14 13)"/></svg>
<svg class="a" style="left:1144px;top:368px;" width="18" height="18" viewBox="0 0 18 18"><path d="M1.500 1.500h6M1.500 1.500v6" stroke="#111" stroke-width="1.2" stroke-dasharray="1.2 1.2"/><path d="M8 1.500h9M1.500 8v9.500" stroke="#111" stroke-width="1.4"/><path d="M1.500 9.500l8-8" stroke="#1e6fd9" stroke-width="1.5"/></svg>
<svg class="a" style="left:1144px;top:390px;" width="18" height="18" viewBox="0 0 18 18"><path d="M1.500 1.500h6M1.500 1.500v6" stroke="#111" stroke-width="1.2" stroke-dasharray="1.2 1.2"/><path d="M9 1.500h8M1.500 9v8.500" stroke="#111" stroke-width="1.4"/><path d="M1.500 10q0-8.500 8.500-8.500" fill="none" stroke="#1e6fd9" stroke-width="1.6"/></svg>
<svg class="a" style="left:1144px;top:411px;" width="18" height="18" viewBox="0 0 18 18"><path d="M1 9h6.500" stroke="#111" stroke-width="1.4"/><path d="M9.500 9h7.500" stroke="#1e6fd9" stroke-width="1.3" stroke-dasharray="1.6 1.2"/><path d="M5 14.500l5.500-11" stroke="#1e6fd9" stroke-width="1.4"/></svg>
<svg class="a" style="left:1144px;top:434px;" width="18" height="18" viewBox="0 0 18 18"><path d="M1 10h4.500" stroke="#111" stroke-width="1.4"/><path d="M6.500 10h6" stroke="#111" stroke-width="1.3" stroke-dasharray="1.6 1.2"/><path d="M11 15.500l5.500-11" stroke="#1e6fd9" stroke-width="1.5"/></svg>
<svg class="a" style="left:1144px;top:455px;" width="18" height="18" viewBox="0 0 18 18"><path d="M8 9l8-7.500M10 8l7-3M9 7l4-6" stroke="#9ab0c8" stroke-width=".9" stroke-dasharray="1 1"/><path d="M7 8l2-4 .5 3 3.500-2-2 3.500 3 .5-3 1.500 2 3-3.500-1.500-.5 3.500-1.500-3-3 2 1.500-3.500-3.500-.5 3.500-1z" fill="#f6c21c" stroke="#c8541c" stroke-width=".6"/><path d="M1.500 14.500l5-5 2.500 2.500-5 5q-2.500 0-2.500-2.500z" fill="#d8201c" stroke="#8a100c" stroke-width=".5"/><path d="M10 9.500l2.500-2.500" stroke="#222" stroke-width="1.2"/></svg>
<svg class="a" style="left:1144px;top:477px;" width="18" height="18" viewBox="0 0 18 18"><path d="M5 3.500h-3.500v11h15v-11h-3.500" fill="#f4f8fc" stroke="#333" stroke-width="1.4"/><rect x="4.1" y="2.1" width="2.8" height="2.8" fill="#1e6fd9" stroke="#0d47a1" stroke-width=".4"/><rect x="11.1" y="2.1" width="2.8" height="2.8" fill="#1e6fd9" stroke="#0d47a1" stroke-width=".4"/></svg>
<svg class="a" style="left:1144px;top:500px;" width="18" height="18" viewBox="0 0 18 18"><path d="M1 9h16" stroke="#111" stroke-width="1.5"/><path d="M3.500 5.500l5 3.500-5 3.500zM14.500 5.500l-5 3.500 5 3.500z" fill="#1f4478"/></svg>
<div class="b " style="left:1146px;top:522px;width:14px;height:1px;background:#c4c4c4;"></div>
<svg class="a" style="left:1144px;top:527px;" width="18" height="18" viewBox="0 0 18 18"><path d="M1.500 1v16M16.500 1v16" stroke="#111" stroke-width="1.4"/><path d="M2 5h14" stroke="#111" stroke-width="1.3"/><path d="M2 5l3.500-2v4zM16 5l-3.500-2v4z" fill="#111"/></svg>
<svg class="a" style="left:1144px;top:550px;" width="18" height="18" viewBox="0 0 18 18"><path d="M2.500 4.500l11 9" stroke="#111" stroke-width="1.3"/><path d="M4.500 1.500l-3.500 5M16.500 11l-3.500 5.500" stroke="#111" stroke-width="1.3"/><path d="M2.500 4.500l4.200 1-2.200 2.700zM13.500 13.500l-4.200-1 2.200-2.700z" fill="#111"/></svg>
<svg class="a" style="left:1144px;top:572px;" width="18" height="18" viewBox="0 0 18 18"><circle cx="9" cy="9" r="7.3" fill="#f7f9fc" stroke="#333" stroke-width="1.1"/><path d="M9 9l-4.500-4.500" stroke="#111" stroke-width="1.2"/><path d="M3.500 3.500l4 1-3 3z" fill="#111"/></svg>
<svg class="a" style="left:1144px;top:594px;" width="18" height="18" viewBox="0 0 18 18"><circle cx="9" cy="9" r="7.3" fill="#f7f9fc" stroke="#333" stroke-width="1.1"/><path d="M4.500 4.500l9 9" stroke="#111" stroke-width="1.2"/><path d="M3.500 3.500l4 1-3 3zM14.500 14.500l-4-1 3-3z" fill="#111"/></svg>
<svg class="a" style="left:1144px;top:616px;" width="18" height="18" viewBox="0 0 18 18"><path d="M1 16.500h16" stroke="#111" stroke-width="1.4"/><path d="M1.500 16l8.500-14.500" stroke="#111" stroke-width="1.3"/><path d="M8.500 4q6 3 7 11" fill="none" stroke="#111" stroke-width="1.1"/><path d="M7.500 3.500l4 .8-2 2.600zM15.800 16l-2-3.500 3.200-.4z" fill="#111"/></svg>
<div class="b " style="left:1146px;top:639px;width:14px;height:1px;background:#c4c4c4;"></div>
<svg class="a" style="left:1144px;top:643px;" width="18" height="18" viewBox="0 0 18 18"><path d="M5 1.500l-3 15M16 1.500l-3 15" stroke="#111" stroke-width="1.3"/><path d="M4 8h10.500" stroke="#111" stroke-width="1"/><path d="M4 8l3-1.600v3.200zM14.500 8l-3-1.600v3.200z" fill="#111"/></svg>
<div class="b " style="left:1146px;top:666px;width:14px;height:1px;background:#c4c4c4;"></div>
<svg class="a" style="left:1144px;top:672px;" width="18" height="18" viewBox="0 0 18 18"><rect x="1.5" y="1.5" width="9" height="9" fill="url(#go)" stroke="#2f5796"/><rect x="5" y="5" width="8" height="8" fill="url(#go)" stroke="#d8e4f2" stroke-width=".9"/><rect x="9" y="9.5" width="7.5" height="7" fill="url(#gow)" stroke="#3f6fae"/></svg>
<svg class="a" style="left:1144px;top:695px;" width="18" height="18" viewBox="0 0 18 18"><rect x="1.5" y="1.5" width="8" height="7.5" fill="url(#gow)" stroke="#3f6fae"/><rect x="5" y="5" width="8" height="8" fill="url(#go)" stroke="#d8e4f2" stroke-width=".9"/><rect x="9" y="9.5" width="7.5" height="7" fill="url(#gow)" stroke="#3f6fae"/></svg>
<svg class="a" style="left:1144px;top:717px;" width="18" height="18" viewBox="0 0 18 18"><rect x="6" y="6" width="10.5" height="10.5" fill="url(#gow)" stroke="#3f6fae" stroke-width="1"/><rect x="1.5" y="1.5" width="10.5" height="10.5" fill="url(#go)" stroke="#2f5796" stroke-width="1"/></svg>
<svg class="a" style="left:1144px;top:739px;" width="18" height="18" viewBox="0 0 18 18"><rect x="1.5" y="1.5" width="10.5" height="10.5" fill="url(#go)" stroke="#2f5796" stroke-width="1"/><rect x="6" y="6" width="10.5" height="10.5" fill="url(#gow)" stroke="#3f6fae" stroke-width="1"/></svg>
<div class="b " style="left:29px;top:157px;width:1110px;height:572px;background:#000;"></div>
<svg class="a" style="left:29px;top:157px;overflow:hidden" width="1110" height="572" viewBox="29 157 1110 572" shape-rendering="crispEdges"><path fill="#00ffff" d="M363 198h340v1h-340zM363 678h340v1h-340zM363 198h1v481h-1zM702 198h1v481h-1zM364 200h337v1h-337zM364 676h337v1h-337zM364 200h1v477h-1zM700 200h1v477h-1zM366 201h334v1h-334zM366 674h334v1h-334zM366 201h1v474h-1zM699 201h1v474h-1zM549 279h26v4h-26zM551 278h2v6h-2zM569 278h1v6h-1zM572 278h2v6h-2zM560 327h16v4h-16zM540 386h27v4h-27zM518 437h26v4h-26zM521 592h4v4h-4zM528 593h17v3h-17zM538 591h2v6h-2zM541 591h2v6h-2zM527 655h10v3h-10zM529 658h7v3h-7zM540 656h2v2h-2zM540 659h2v2h-2zM543 656h5v2h-5zM545 657h2v4h-2zM551 655h8v7h-8zM563 655h8v7h-8zM544 663h13v2h-13zM558 662h2v3h-2zM565 663h8v2h-8z"/><path fill="#ff0000" d="M478 224h107v1h-107zM478 230h107v1h-107zM478 222h1v17h-1zM584 222h1v18h-1zM523 228h1v12h-1zM478 244h1v1h-1zM523 244h1v1h-1zM584 244h1v1h-1zM434 259h1v369h-1zM446 259h1v34h-1zM444 259h14v1h-14zM462 259h1v1h-1zM444 292h14v1h-14zM462 292h1v1h-1zM446 302h1v68h-1zM444 302h14v1h-14zM462 302h1v1h-1zM444 369h14v1h-14zM462 369h1v1h-1zM446 378h1v32h-1zM444 378h14v1h-14zM462 378h1v1h-1zM444 409h14v1h-14zM462 409h1v1h-1zM446 419h1v140h-1zM444 419h14v1h-14zM462 419h1v1h-1zM444 558h14v1h-14zM462 558h1v1h-1zM446 567h1v40h-1zM444 567h14v1h-14zM462 567h1v1h-1zM444 606h14v1h-14zM462 606h1v1h-1zM446 611h1v17h-1zM444 611h14v1h-14zM462 611h1v1h-1zM444 627h14v1h-14zM462 627h1v1h-1zM432 259h26v1h-26zM431 627h27v1h-27zM628 259h1v369h-1zM619 259h1v34h-1zM614 259h8v1h-8zM609 259h1v1h-1zM614 292h8v1h-8zM609 292h1v1h-1zM619 302h1v68h-1zM614 302h8v1h-8zM609 302h1v1h-1zM614 369h8v1h-8zM609 369h1v1h-1zM619 378h1v32h-1zM614 378h8v1h-8zM609 378h1v1h-1zM614 409h8v1h-8zM609 409h1v1h-1zM619 419h1v140h-1zM614 419h8v1h-8zM609 419h1v1h-1zM614 558h8v1h-8zM609 558h1v1h-1zM619 567h1v45h-1zM614 567h8v1h-8zM609 567h1v1h-1zM614 611h8v1h-8zM609 611h1v1h-1zM619 611h1v17h-1zM614 611h8v1h-8zM609 611h1v1h-1zM614 627h8v1h-8zM609 627h1v1h-1zM613 259h18v1h-18zM614 627h16v1h-16zM473 642h120v1h-120zM473 647h120v1h-120zM473 639h1v10h-1zM592 639h1v10h-1zM486 638h1v7h-1zM489 638h1v7h-1zM516 638h1v7h-1zM519 638h1v7h-1zM489 642h1v7h-1zM519 642h1v7h-1zM474 634h1v1h-1zM486 634h1v1h-1zM489 634h1v1h-1zM516 634h1v1h-1zM519 634h1v1h-1zM592 634h1v1h-1zM493 660h5v1h-5zM501 420h1v1h-1zM546 420h1v1h-1z"/><path fill="#ff00ff" d="M513 249h82v1h-82zM539 249h1v11h-1zM567 249h1v11h-1zM513 249h1v130h-1zM513 378h44v1h-44zM556 369h1v10h-1zM523 369h34v1h-34zM523 259h1v34h-1zM523 259h62v1h-62zM584 259h1v34h-1zM582 292h3v1h-3zM523 292h38v1h-38zM560 292h1v11h-1zM523 302h38v1h-38zM523 302h1v68h-1zM581 298h1v5h-1zM581 302h4v1h-4zM584 302h1v68h-1zM582 369h3v1h-3zM594 249h1v121h-1zM594 369h12v1h-12zM605 369h1v51h-1zM593 419h13v1h-13zM593 419h1v193h-1zM584 611h10v1h-10zM584 567h1v45h-1zM579 567h6v1h-6zM579 558h6v1h-6zM584 419h1v10h-1zM584 450h1v109h-1zM583 378h13v1h-13zM583 409h13v1h-13zM583 378h1v32h-1zM595 378h1v32h-1zM580 419h5v1h-5zM580 415h1v5h-1zM469 409h45v1h-45zM513 406h1v4h-1zM513 406h5v1h-5zM469 409h1v203h-1zM469 611h20v1h-20zM523 409h30v1h-30zM552 409h1v11h-1zM478 419h75v1h-75zM478 419h1v140h-1zM478 558h18v1h-18zM495 558h1v10h-1zM478 567h18v1h-18zM478 567h1v40h-1zM478 606h9v1h-9zM533 558h18v1h-18zM533 567h18v1h-18zM533 558h1v10h-1zM511 661h67v1h-67z"/><path fill="#5a9a86" d="M531 305h4v64h-4zM524 314h28v3h-28zM524 358h28v3h-28zM561 302h20v1h-20zM557 378h26v1h-26zM513 379h1v27h-1zM553 419h27v1h-27zM492 628h25v1h-25zM531 283h9v1h-9zM534 280h1v1h-1zM570 260h8v2h-8zM573 265h1v3h-1zM570 273h8v2h-8zM585 380h10v1h-10zM585 408h10v1h-10zM585 380h1v29h-1zM594 380h1v29h-1zM551 555h27v1h-27zM551 566h27v1h-27zM551 555h1v12h-1zM577 555h1v12h-1zM570 457h14v1h-14zM570 533h14v1h-14zM570 457h1v77h-1zM583 457h1v77h-1z"/><path fill="#000" d="M572 261h3v1h-3zM554 280h2v1h-2zM566 281h2v1h-2zM566 327h1v2h-1zM569 329h1v2h-1zM572 328h1v1h-1zM546 386h3v4h-3zM552 387h3v2h-3zM560 386h2v2h-2zM525 437h2v4h-2zM530 438h2v2h-2zM537 437h2v2h-2zM522 593h2v1h-2zM553 657h2v1h-2zM556 659h1v1h-1zM565 657h3v1h-3zM566 659h1v1h-1z"/><path fill="#00ff00" d="M546 260h1v32h-1zM562 260h1v16h-1zM562 275h23v1h-23zM524 304h29v1h-29zM552 304h1v65h-1zM584 380h1v30h-1zM499 420h49v1h-49zM499 422h49v1h-49zM479 421h17v1h-17zM491 421h1v136h-1zM493 421h1v136h-1zM478 465h18v1h-18zM478 467h18v1h-18zM478 510h18v1h-18zM478 512h18v1h-18zM478 556h18v1h-18zM533 448h1v79h-1zM536 448h1v79h-1zM533 448h9v2h-9zM525 450h9v2h-9zM533 473h9v4h-9zM525 473h9v1h-9zM525 476h9v1h-9zM533 498h9v4h-9zM525 498h9v1h-9zM525 501h9v1h-9zM525 525h17v2h-17zM486 567h1v41h-1zM550 554h29v1h-29zM550 567h29v1h-29zM538 616h5v1h-5zM565 616h5v1h-5zM472 611h1v19h-1zM472 629h15v1h-15zM474 611h1v17h-1zM474 627h13v1h-13zM486 623h1v12h-1zM489 629h1v6h-1zM516 623h1v12h-1zM519 623h1v12h-1zM519 627h75v1h-75zM519 629h75v1h-75zM592 611h2v19h-2zM569 456h1v78h-1zM569 456h16v1h-16z"/><path fill="#1ee65a" d="M550 554h29v1h-29zM550 567h29v1h-29zM550 554h1v14h-1zM578 554h1v14h-1z"/><path fill="#ffff00" d="M540 252h27v1h-27zM540 255h27v1h-27zM498 225h6v6h-6zM529 219h6v5h-6zM551 225h6v6h-6zM441 273h5v6h-5zM441 333h5v6h-5zM441 392h5v5h-5zM429 440h5v7h-5zM441 486h5v6h-5zM441 584h5v6h-5zM441 617h5v5h-5zM615 273h5v6h-5zM615 333h5v6h-5zM615 392h5v5h-5zM623 440h5v7h-5zM615 486h5v6h-5zM615 561h5v4h-5zM615 587h5v6h-5zM615 617h5v5h-5zM478 637h5v5h-5zM501 637h5v5h-5zM553 637h6v5h-6zM530 642h6v5h-6zM493 655h4v5h-4zM598 431h22v5h-22zM598 479h19v4h-19z"/><path fill="#ffffff" d="M658 157h1v68h-1zM593 160h128v1h-128zM653 155h11v1h-11zM653 165h11v1h-11zM653 155h1v11h-1zM663 155h1v11h-1zM48 700h9v1h-9zM48 708h9v1h-9zM48 700h1v9h-1zM56 700h1v9h-1zM52 655h1v45h-1zM57 704h46v1h-46z"/><path fill="#ff0001" d="M658 198h1v1h-1zM658 200h1v2h-1z"/><path fill="#6e6e6e" d="M884 695h32v5h-32zM916 691h64v5h-64zM980 695h130v5h-130z"/><path fill="#858585" d="M884 691h226v1h-226zM884 699h226v1h-226zM884 691h1v9h-1zM1109 691h1v9h-1z"/><path d="M490 648L493.5 660" stroke="#ff0000" stroke-width="1" fill="none"/><path d="M520 648L523 656" stroke="#ff0000" stroke-width="1" fill="none"/><path d="M530.5 268.5h9v16q0 3-3 3h-3q-3 0-3-3z" stroke="#5a9a86" stroke-width="1" fill="none"/><ellipse cx="573.5" cy="268" rx="7.5" ry="5" stroke="#5a9a86" stroke-dasharray="1.500 1.500" fill="none"/><path d="M567 265.5h14" stroke="#5a9a86" stroke-dasharray="3 1" fill="none"/><path d="M534.5 328.5L541.5 323.5L545.5 324.5L550.5 335.5L541.5 342.5L537.5 332.5z" stroke="#5a9a86" stroke-width="1" fill="none"/><path d="M537.5 326.5l6 13.500M545.5 324.5l-3.500 2.500 5.500 10.500M537.5 332.5l4-2" stroke="#5a9a86" stroke-width="1" fill="none"/><path d="M586 381l8 26M594 381l-8 26" stroke="#5a9a86" stroke-width="1" fill="none"/><path d="M556.5 369A24.5 24.5 0 0 1 579.5 345" stroke="#5a9a86" stroke-width="1" fill="none"/><path d="M560.5 292q0.5-7 5-10" stroke="#5a9a86" stroke-width="1" fill="none"/><path d="M523.5 379.5A24 24 0 0 1 546.5 403.5" stroke="#5a9a86" stroke-width="1" fill="none"/><path d="M552.5 408A26 26 0 0 1 578 384.5" stroke="#5a9a86" stroke-width="1" fill="none"/><path d="M492 601.5A26.5 26.5 0 0 1 516.5 622.5V628" stroke="#5a9a86" stroke-width="1" fill="none"/><path d="M479.5 570l6 34M485.5 570l-6 34" stroke="#00ff00" stroke-width="1" fill="none"/><ellipse cx="540.5" cy="615.5" rx="6" ry="2.300" stroke="#00ff00" fill="none" shape-rendering="auto"/><ellipse cx="567.5" cy="615.5" rx="6" ry="2.300" stroke="#00ff00" fill="none" shape-rendering="auto"/><clipPath id="hc"><rect x="571" y="458" width="12" height="75"/></clipPath><g clip-path="url(#hc)" stroke="#4f927e" fill="none" shape-rendering="auto"><path d="M570 463l14 -13" stroke-width="1"/><path d="M570 470l14 -13" stroke-width="1"/><path d="M570 476l14 -13" stroke-width="1"/><path d="M570 482l14 -13" stroke-width="1.6"/><path d="M570 490l14 -13" stroke-width="1"/><path d="M570 494l14 -13" stroke-width="1"/><path d="M570 498l14 -13" stroke-width="1"/><path d="M570 502l14 -13" stroke-width="1"/><path d="M570 510l14 -13" stroke-width="1"/><path d="M570 515l14 -13" stroke-width="2.2"/><path d="M570 522l14 -13" stroke-width="1"/><path d="M570 528l14 -13" stroke-width="1"/><path d="M570 533l14 -13" stroke-width="1.6"/><path d="M570 540l14 -13" stroke-width="1"/><path d="M570 547l14 -13" stroke-width="1"/><path d="M570 553l14 -13" stroke-width="1"/></g><rect x="579" y="275" width="4" height="24" rx="2" ry="3" fill="#00ffff" shape-rendering="auto"/><rect x="579" y="344" width="4" height="32" rx="2" ry="3" fill="#00ffff" shape-rendering="auto"/><rect x="578" y="384" width="4" height="32" rx="2" ry="3" fill="#00ffff" shape-rendering="auto"/><rect x="582" y="428" width="4" height="23" rx="2" ry="3" fill="#00ffff" shape-rendering="auto"/><rect x="488" y="599" width="4" height="31" rx="2" ry="3" fill="#00ffff" shape-rendering="auto"/><rect x="517" y="404" width="31" height="4" rx="3" ry="2" fill="#00ffff" shape-rendering="auto"/><path d="M514 658l4-3h9l3 3-3 3h-9z" fill="#00ffff" shape-rendering="auto"/><path d="M523 655h4v5h-4z" fill="#ffff00"/><path d="M584 434h14v1h-14zM579 481h19v1h-19z" fill="#fff"/><path d="M583 434h1v1h-1zM578 481h1v1h-1zM579 480h1v1h-1z" fill="#00ff00"/><path d="M48.5 665.5h8l-4-11zM51 665v-7M54 665v-7" stroke="#ffffff" stroke-width="1" fill="none"/><path d="M91.5 700.5v8l11-4zM92 703h7M92 706h7" stroke="#ffffff" stroke-width="1" fill="none"/><path d="M48.5 636.5l4 4.5 5-4.5M52.5 641v5" stroke="#fff" fill="none" shape-rendering="auto"/><path d="M112 699.5l9 9.5M121 699.5l-9 9.500" stroke="#fff" fill="none" shape-rendering="auto"/><g font-family="Liberation Sans, sans-serif" font-size="19.5" fill="#828282" shape-rendering="auto"><text x="894.4" y="687">1000</text><text x="1087.2" y="687">7000</text><text x="878" y="717">0</text><text x="958.2" y="717">3000</text></g></svg>
<div class="b " style="left:654px;top:144px;width:137px;height:33px;background:#fff;border:1px solid #767676;box-sizing:border-box;box-shadow:2px 2px 3px rgba(0,0,0,.35);"></div>
<div class="t " style="left:660.2px;top:142.609px;font-size:19.6px;color:#575757;"><span class="k" style="font-size:21.3px">导出</span>PDF<span class="k" style="font-size:21.3px">文件</span></div>
<div class="b " style="left:0px;top:729px;width:1139px;height:32px;background:#efefef;"></div>
<svg class="a" style="left:28px;top:729px;" width="160" height="32" viewBox="0 0 160 32"><rect x="0.5" y="2.5" width="58" height="28" fill="#f0f0f0" stroke="#a0a0a0"/><path d="M29.5 2.5v28" stroke="#a0a0a0"/><path d="M21 9.500v14l-8-7z" fill="#696969"/><path d="M40 9.500v14l8-7z" fill="#696969"/><path d="M60 2L73.500 30.500H130.500L144.500 2z" fill="#fff"/><path d="M60 2L73.500 30.500M130.500 30.500L144.500 2" stroke="#000" stroke-width="1" fill="none"/></svg>
<div class="t " style="left:109.9px;top:728.524px;font-size:21px;color:#000;"><span class="k" style="font-size:21px">模型</span></div>
<div class="b " style="left:0px;top:760.5px;width:1169px;height:4.5px;background:#e2e2e2;"></div>
<div class="b " style="left:2px;top:764.7px;width:1164px;height:1.8px;background:#6a6a6a;"></div>
<div class="b " style="left:2px;top:767px;width:1px;height:32px;background:#696969;"></div>
<div class="b " style="left:3px;top:767px;width:1163px;height:32px;background:#fff;"></div>
<div class="t " style="left:5px;top:754.742px;font-size:12px;color:#000;"><span class="k" style="font-size:13.1px">选择区域第一个点</span><span style="margin-left:-.3px;color:#555">:</span></div>
<div class="t " style="left:5px;top:770.742px;font-size:12px;color:#000;"><span class="k" style="font-size:13.1px">选择区域第二个点</span><span style="margin-left:-.3px;color:#555">:</span></div>
<div class="b " style="left:1148px;top:767px;width:17px;height:32px;background:#f0f0f0;"></div>
<svg class="a" style="left:1148px;top:767px;" width="17" height="32" viewBox="0 0 17 32"><path d="M4.5 10.5l4-4 4 4" fill="none" stroke="#505050" stroke-width="1.6"/><path d="M4.5 21.5l4 4 4-4" fill="none" stroke="#505050" stroke-width="1.6"/></svg>
<div class="b " style="left:2px;top:799px;width:1165px;height:1px;background:#828282;"></div>
<div class="b " style="left:2px;top:800px;width:2px;height:20px;background:#696969;"></div>
<div class="b " style="left:4px;top:800px;width:1162px;height:20px;background:#fff;"></div>
<div class="t " style="left:5.3px;top:785.148px;font-size:6.5px;color:#9a80b4;"><span class="k" style="font-size:7.2px">命令</span>:</div>
<div class="b " style="left:1064px;top:802px;width:71px;height:18px;background:#f0f0f0;"></div>
<div class="b " style="left:1080px;top:802px;width:17px;height:17px;background:#cdcdcd;"></div>
<svg class="a" style="left:1064px;top:802px;" width="71" height="18" viewBox="0 0 71 18"><path d="M10.5 4.5l-4 4 4 4" fill="none" stroke="#505050" stroke-width="1.6"/><path d="M59.5 4.5l4 4-4 4" fill="none" stroke="#505050" stroke-width="1.6"/></svg>
<div class="b " style="left:1135px;top:802px;width:31px;height:18px;background:#f0f0f0;"></div>
<div class="b " style="left:0px;top:820px;width:1169px;height:32px;background:#f0f0f0;"></div>
<div class="b " style="left:0px;top:820px;width:1169px;height:2px;background:#f7f7f7;"></div>
<div class="t coords" style="left:5.5px;top:816.323px;font-size:21px;color:#000;width:311px;overflow:hidden;">30779.620522,&nbsp; <i style="margin-left:1px"></i>25336.324534,&nbsp; <i style="margin-left:2.5px"></i>0.000000</div>
<div class="b " style="left:316px;top:823px;width:2px;height:26px;background:#f0f0f0;"></div>
<div class="t " style="left:321px;top:819.424px;font-size:21px;color:#000;"><span class="k" style="font-size:21px">栅格</span></div>
<div class="t " style="left:375px;top:819.424px;font-size:21px;color:#000;"><span class="k" style="font-size:21px">正交</span></div>
<div class="t " style="left:430px;top:819.424px;font-size:21px;color:#000;"><span class="k" style="font-size:21px">极轴</span></div>
<div class="b " style="left:481px;top:823px;width:94px;height:26px;background:#d5e6f6;border:1px solid #3c8ad8;box-sizing:border-box;"></div>
<div class="t " style="left:483.5px;top:819.424px;font-size:21px;color:#000;"><span class="k" style="font-size:20.7px">对象捕捉</span></div>
<div class="b " style="left:577px;top:823px;width:94px;height:26px;background:#d5e6f6;border:1px solid #3c8ad8;box-sizing:border-box;"></div>
<div class="t " style="left:579.7px;top:819.424px;font-size:21px;color:#000;"><span class="k" style="font-size:20.7px">对象追踪</span></div>
<div class="b " style="left:673px;top:823px;width:56px;height:26px;background:#d5e6f6;border:1px solid #3c8ad8;box-sizing:border-box;"></div>
<div class="t " style="left:676.2px;top:816.697px;font-size:20.5px;color:#000;letter-spacing:1.1px;">DYN</div>
<div class="b " style="left:731px;top:823px;width:52px;height:26px;background:#d5e6f6;border:1px solid #3c8ad8;box-sizing:border-box;"></div>
<div class="t " style="left:734px;top:819.424px;font-size:21px;color:#000;"><span class="k" style="font-size:20.5px">线宽</span></div>
<div class="t " style="left:788px;top:819.424px;font-size:21px;color:#0000ff;"><span class="k" style="font-size:20.9px">提交软件问题或增加新功能</span></div>
<div class="b " style="left:1050px;top:829px;width:114px;height:14px;background:#fff;"></div>
<svg class="a" style="left:1052px;top:829px;" width="18" height="14" viewBox="0 0 18 14"><path d="M1 13.5l4.5-12h3l1 4 1-4h3l3.5 12h-3.4l-1.7-6.5-1.6 6.5h-2l-1.6-6.5-1.8 6.5z" fill="#1fa596"/><path d="M5.5 1.5l5 12M12.5 1.5l-5 12" stroke="#fff" stroke-width=".9"/></svg>
<div class="t logo" style="left:1075px;top:815.922px;font-size:13.5px;color:#000;letter-spacing:-0.25px;"><b style="color:#1a2a6c;font-weight:normal">CAD</b>.MxCloud</div>
<div class="t wm" style="left:968.8px;top:818.244px;font-size:16.9px;color:rgba(95,95,95,.58);filter:blur(.5px);">CSDN @<span class="k" style="font-size:19px">梦想</span>CAD<span class="k" style="font-size:19px">软件</span></div>
<div class="t wm" style="left:968px;top:817.444px;font-size:16.9px;color:rgba(255,255,255,.62);">CSDN @<span class="k" style="font-size:19px">梦想</span>CAD<span class="k" style="font-size:19px">软件</span></div>
<div class="b " style="left:0px;top:0px;width:1169px;height:1px;background:#4c443c;"></div>
<div class="b " style="left:0px;top:69px;width:1px;height:783px;background:#7f8594;"></div>
<div class="b " style="left:1px;top:104px;width:1px;height:748px;background:#c9cad0;"></div>
<div class="b " style="left:1166px;top:1px;width:1px;height:851px;background:#f8f8f8;"></div>
<div class="b " style="left:1167px;top:0px;width:1px;height:852px;background:#6c6a68;"></div>
<div class="b " style="left:1168px;top:0px;width:1px;height:852px;background:#5c5a58;"></div>
<div class="b " style="left:0px;top:849px;width:1167px;height:1px;background:#fafafa;"></div>
<div class="b " style="left:0px;top:850px;width:1169px;height:2px;background:#3e4448;"></div>
</div>
</body></html>
